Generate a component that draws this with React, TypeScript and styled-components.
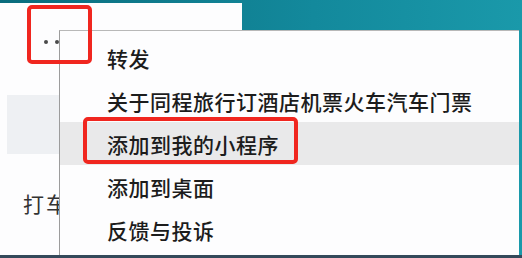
import React from "react";
import styled, { createGlobalStyle } from "styled-components";

const Global = createGlobalStyle`
  html, body { margin: 0; padding: 0; }
  body { width: 522px; height: 258px; overflow: hidden; background: #2f4654; }
`;

const Screen = styled.div`
  position: relative;
  width: 522px;
  height: 258px;
  overflow: hidden;
  background:
    linear-gradient(to bottom, transparent 255px, #34495a 255px),
    linear-gradient(to right, #0a6c7d, #13899c 60%, #1a99aa);
  font-family: "Noto Sans CJK SC", "Noto Sans", sans-serif;
`;

const LeftPanel = styled.div`
  width: 242px;
  height: 252px;
  margin-top: 3px;
  background: #fdfdfe;
  display: flex;
  flex-direction: column;
`;

const TopRow = styled.div`
  height: 92px;
  display: flex;
  align-items: flex-start;
  padding: 37px 0 0 44px;
  box-sizing: border-box;
  gap: 7px;
`;

const Dot = styled.span`
  width: 4px;
  height: 4px;
  border-radius: 50%;
  background: #4a4a4a;
`;

const GreyBand = styled.div`
  margin-left: 7px;
  width: 60px;
  height: 59px;
  background: #eef0f3;
`;

const PanelText = styled.div`
  margin: 35px 0 0 23px;
  font-size: 21px;
  line-height: 28px;
  letter-spacing: 2px;
  color: #333;
`;

const Menu = styled.div`
  position: absolute;
  left: 59px;
  top: 30px;
  width: 460px;
  height: 225px;
  box-sizing: border-box;
  background: #fdfdfe;
  border-left: 1px solid #9c9c9c;
  border-top: 1px solid #b8b8b8;
  padding-top: 5px;
  display: flex;
  flex-direction: column;
`;

const Item = styled.div<{ $active?: boolean }>`
  height: 43px;
  display: flex;
  align-items: center;
  padding-left: 47px;
  font-size: 21px;
  font-weight: 500;
  letter-spacing: 0.5px;
  color: #1c1c1c;
  background: ${(p) => (p.$active ? "#e9e9ea" : "transparent")};
`;

const RedBox = styled.div<{ $l: number; $t: number; $w: number; $h: number }>`
  position: absolute;
  left: ${(p) => p.$l}px;
  top: ${(p) => p.$t}px;
  width: ${(p) => p.$w}px;
  height: ${(p) => p.$h}px;
  box-sizing: border-box;
  border: 4px solid #f0261f;
  border-radius: 5px;
  pointer-events: none;
`;

const items = [
  "转发",
  "关于同程旅行订酒店机票火车汽车门票",
  "添加到我的小程序",
  "添加到桌面",
  "反馈与投诉",
];

export default function App() {
  return (
    <>
      <Global />
      <Screen>
        <LeftPanel>
          <TopRow>
            <Dot />
            <Dot />
          </TopRow>
          <GreyBand />
          <PanelText>打车</PanelText>
        </LeftPanel>
        <Menu>
          {items.map((t, i) => (
            <Item key={t} $active={i === 2}>
              {t}
            </Item>
          ))}
        </Menu>
        <RedBox $l={27} $t={5} $w={65} $h={59} />
        <RedBox $l={83} $t={117} $w={215} $h={47} />
      </Screen>
    </>
  );
}
